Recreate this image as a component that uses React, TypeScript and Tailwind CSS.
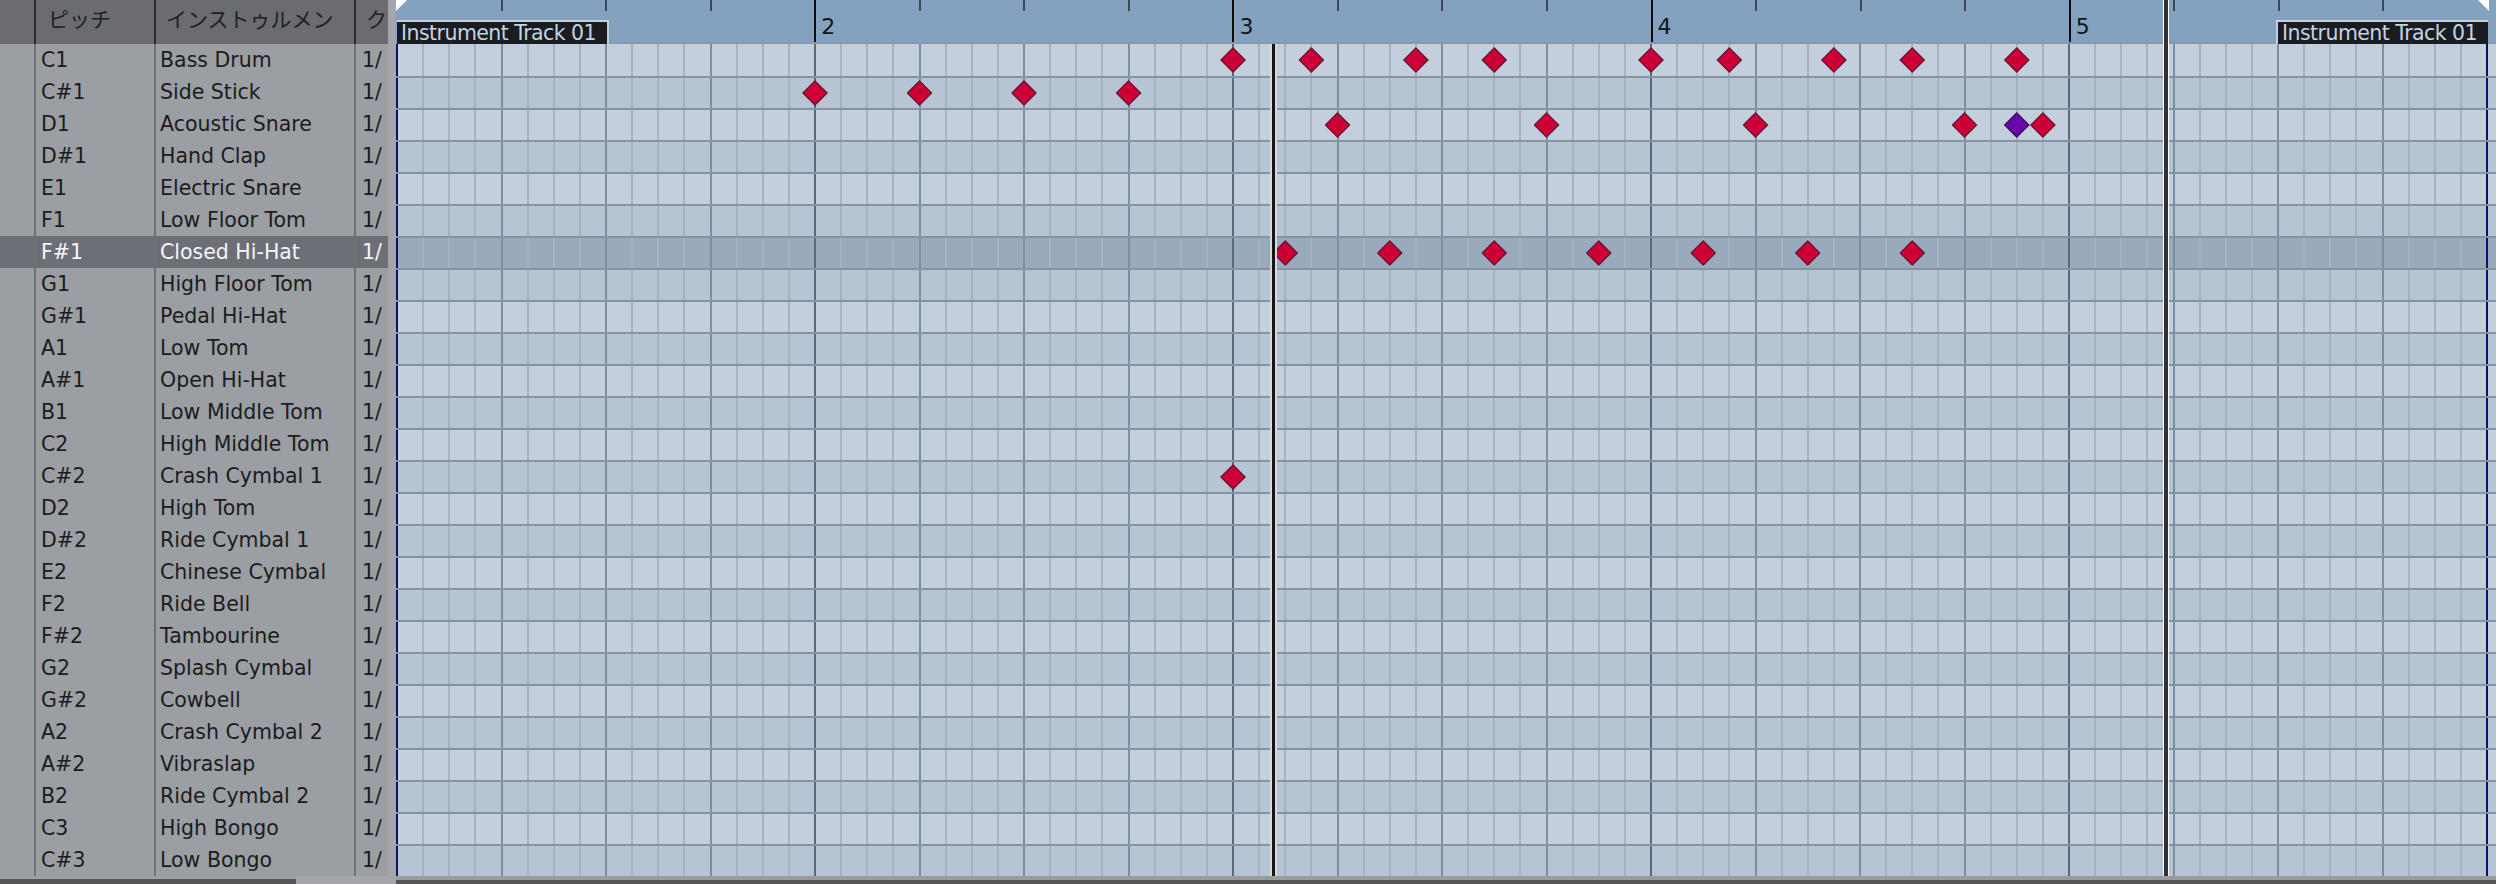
import React from "react";

const pitches = [
  "C1", "C#1", "D1", "D#1", "E1", "F1", "F#1", "G1", "G#1", "A1", "A#1", "B1", "C2",
  "C#2", "D2", "D#2", "E2", "F2", "F#2", "G2", "G#2", "A2", "A#2", "B2", "C3", "C#3",
];

const names = [
  "Bass Drum", "Side Stick", "Acoustic Snare", "Hand Clap", "Electric Snare", "Low Floor Tom",
  "Closed Hi-Hat", "High Floor Tom", "Pedal Hi-Hat", "Low Tom", "Open Hi-Hat", "Low Middle Tom",
  "High Middle Tom", "Crash Cymbal 1", "High Tom", "Ride Cymbal 1", "Chinese Cymbal", "Ride Bell",
  "Tambourine", "Splash Cymbal", "Cowbell", "Crash Cymbal 2", "Vibraslap", "Ride Cymbal 2",
  "High Bongo", "Low Bongo",
];

const SELECTED_ROW = 6;

// row index -> sixteenth steps
const notes: Record<number, number[]> = {
  0: [32, 35, 39, 42, 48, 51, 55, 58, 62],
  1: [16, 20, 24, 28],
  2: [36, 44, 52, 60, 63],
  6: [34, 38, 42, 46, 50, 54, 58],
  13: [32],
};
const selectedNotes: Record<number, number[]> = { 2: [62] };

const steps = Array.from({ length: 80 }, (_, i) => i);
const beats = Array.from({ length: 20 }, (_, i) => i);

const lineClass = (k: number) =>
  k === 0
    ? "border-[#0b0f70]"
    : k % 16 === 0
    ? "border-[#566a80]"
    : k % 4 === 0
    ? "border-[#7d8ea1]"
    : "border-[#a4b2c1]";

const rowBg = (i: number) =>
  i === SELECTED_ROW ? "bg-[#9aaabd]" : i % 2 === 0 ? "bg-[#c3cfdc]" : "bg-[#b7c4d3]";

const Diamond = ({ selected }: { selected?: boolean }) => (
  <div
    className={`absolute left-[-14px] top-1/2 z-10 flex h-[26px] w-[26px] -translate-y-1/2 items-center justify-center [clip-path:polygon(50%_0,100%_50%,50%_100%,0_50%)] ${
      selected ? "bg-[#3a0d5e]" : "bg-[#6b1534]"
    }`}
  >
    <div
      className={`h-[22px] w-[22px] [clip-path:polygon(50%_0,100%_50%,50%_100%,0_50%)] ${
        selected ? "bg-[#6907a9]" : "bg-[#cc0036]"
      }`}
    />
  </div>
);

const Ruler = () => (
  <div className="flex h-[44px] shrink-0 border-b-2 border-[#8899ae] bg-[#84a2c0]">
    {beats.map((b) => (
      <div key={b} className="flex h-full w-[104.56px] shrink-0 items-start">
        {b > 0 && b % 4 === 0 && (
          <>
            <div className="h-full w-[2px] bg-[#0d0d0d]" />
            <span className="ml-[5px] mt-[16px] text-[22px] leading-none text-[#111417]">{b / 4 + 1}</span>
          </>
        )}
        {b % 4 !== 0 && <div className="h-[11px] w-[2px] bg-[#3a4858]" />}
      </div>
    ))}
  </div>
);

const TrackLabel = ({ side }: { side: "left" | "right" }) => (
  <div
    className={`absolute top-[20px] h-[24px] w-[212px] overflow-hidden border-t-2 border-[#c5cfd9] bg-[#1b1c1f] pl-[4px] text-[20.5px] leading-[22px] tracking-[-0.55px] whitespace-nowrap text-[#c2d4e6] ${
      side === "left" ? "left-[1px] border-r-2" : "left-[1880px] border-l-2"
    }`}
  >
    Instrument Track 01
  </div>
);

export default function App() {
  return (
    <div className="flex h-[884px] w-[2496px] flex-col overflow-hidden bg-[#9b9ea2] font-['DejaVu_Sans','Noto_Sans_CJK_JP',sans-serif]">
      <div className="flex h-[876px] shrink-0">
        {/* instrument list */}
        <div className="flex w-[388px] shrink-0 flex-col bg-[#9b9ea2]">
          <div className="flex h-[44px] shrink-0 bg-[#6a6c70] text-[21px] leading-[40px] whitespace-nowrap text-[#1f2023]">
            <div className="w-[36px] shrink-0 border-r-2 border-[#2b2d30]" />
            <div className="w-[120px] shrink-0 overflow-hidden border-r-2 border-[#2b2d30] pl-[12px]">ピッチ</div>
            <div className="w-[200px] shrink-0 overflow-hidden border-r-2 border-[#2b2d30] pl-[10px]">インストゥルメン</div>
            <div className="flex-1 overflow-hidden pl-[10px]">ク</div>
          </div>
          {pitches.map((p, i) => (
            <div
              key={p}
              className={`flex h-[32px] shrink-0 text-[20.5px] leading-[33px] whitespace-nowrap ${
                i === SELECTED_ROW ? "bg-[#6c6f76] text-[#f6f6f6]" : "text-[#1c1c1e]"
              }`}
            >
              <div className="w-[36px] shrink-0 border-r-2 border-[#6f7276]" />
              <div className="w-[120px] shrink-0 overflow-hidden border-r-2 border-[#6f7276] pl-[5px]">{p}</div>
              <div className="w-[200px] shrink-0 overflow-hidden border-r-2 border-[#6f7276] pl-[4px]">{names[i]}</div>
              <div className="flex-1 overflow-hidden pl-[6px]">1/</div>
            </div>
          ))}
        </div>

        <div className="w-[8px] shrink-0 bg-[#a4a6a9]" />

        {/* note grid */}
        <div className="relative flex min-w-0 flex-1 flex-col overflow-hidden bg-[#c3cfdc]">
          <Ruler />
          <div className="flex flex-col">
            {pitches.map((p, i) => (
              <div
                key={p}
                className={`flex h-[32px] shrink-0 ${i > 0 ? "border-t-2 border-[#8593a3]" : ""} ${rowBg(i)}`}
              >
                {steps.map((k) => (
                  <div key={k} className={`relative h-full w-[26.14px] shrink-0 border-l-2 ${lineClass(k)}`}>
                    {notes[i]?.includes(k) && <Diamond />}
                    {selectedNotes[i]?.includes(k) && <Diamond selected />}
                  </div>
                ))}
                <div className="h-full flex-1 border-l-2 border-[#0b0f70]" />
              </div>
            ))}
          </div>

          <div className="absolute left-0 top-0 h-[11px] w-[11px] bg-white [clip-path:polygon(0_0,100%_0,0_100%)]" />
          <div className="absolute left-[2082px] top-0 h-[11px] w-[11px] bg-white [clip-path:polygon(0_0,100%_0,100%_100%)]" />
          <TrackLabel side="left" />
          <TrackLabel side="right" />
          <div className="absolute bottom-0 left-[874px] top-[44px] z-20 w-[7px] border-x-2 border-[#d8d9da] bg-[#161616]" />
          <div className="absolute bottom-0 left-[1767px] top-0 z-20 w-[6px] border-x border-white bg-[#2e3236]" />
        </div>
      </div>

      {/* scroll bar strip */}
      <div className="flex h-[8px] shrink-0">
        <div className="h-full w-[296px] shrink-0 border-t-[3px] border-[#9b9ea2] bg-[#545658]" />
        <div className="h-full w-[100px] shrink-0 bg-[#a5a7aa]" />
        <div className="h-full flex-1 border-t-4 border-[#9a9b9d] bg-[#545658]" />
      </div>
    </div>
  );
}
